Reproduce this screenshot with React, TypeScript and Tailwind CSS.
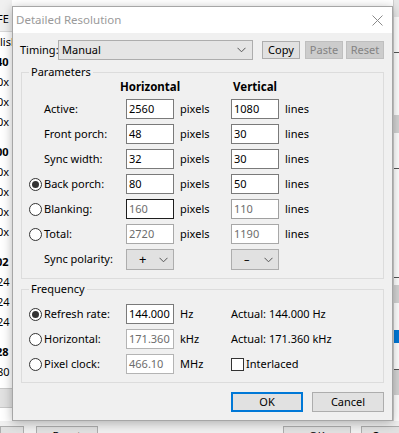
import React from 'react';

const Chevron = () => (
  <svg width="9" height="6" viewBox="0 0 9 6" className="shrink-0">
    <path d="M0.5 0.8 L4.5 4.8 L8.5 0.8" fill="none" stroke="#555" strokeWidth="1" />
  </svg>
);

const Radio = ({ checked }: { checked?: boolean }) => (
  <div className="w-[15px] flex items-center">
    <div className="w-[13px] h-[13px] rounded-full border border-[#333] bg-white flex items-center justify-center">
      {checked && <div className="w-[7px] h-[7px] rounded-full bg-[#333]" />}
    </div>
  </div>
);

const Field = ({ value, muted, border = 'border-[#7a7a7a]' }: { value: string; muted?: boolean; border?: string }) => (
  <div className={`w-[48px] h-[20px] bg-white border ${border} flex items-center pl-[2px] ${muted ? 'text-[#6d6d6d]' : 'text-black'}`}>
    {value}
  </div>
);

const Combo = ({ sign, signClass }: { sign: string; signClass: string }) => (
  <div className="w-[48px] h-[21px] bg-[#e1e1e1] border border-[#adadad] flex items-center">
    <span className={signClass}>{sign}</span>
    <span className="ml-auto mr-[5px]"><Chevron /></span>
  </div>
);

type Row = { label: string; radio?: 'on' | 'off'; h: string; v: string; muted?: boolean; hb?: string; vb?: string };

const rows: Row[] = [
  { label: 'Active:', h: '2560', v: '1080' },
  { label: 'Front porch:', h: '48', v: '30' },
  { label: 'Sync width:', h: '32', v: '30' },
  { label: 'Back porch:', radio: 'on', h: '80', v: '50' },
  { label: 'Blanking:', radio: 'off', h: '160', v: '110', muted: true, hb: 'border-[#1e1e1e]', vb: 'border-[#a0a0a0]' },
  { label: 'Total:', radio: 'off', h: '2720', v: '1190', muted: true, hb: 'border-[#a8a8a8]', vb: 'border-[#a8a8a8]' },
];

const GroupBox = ({ title, className, children }: { title: string; className: string; children: React.ReactNode }) => (
  <div className={`relative border border-[#dcdcdc] ${className}`}>
    <span className="absolute -top-[9px] left-[7px] px-[2px] bg-[#f0f0f0] leading-[16px]">{title}</span>
    {children}
  </div>
);

const leftItems: { t: string; b?: boolean; ml: string; gap?: boolean }[] = [
  { t: 'lish', ml: 'ml-[0px]' },
  { t: '40', b: true, ml: 'ml-[-4px]' },
  { t: '0x', ml: 'ml-[-3px]' },
  { t: '0x', ml: 'ml-[-3px]' },
  { t: '0x', ml: 'ml-[-3px]' },
  { t: '00', b: true, ml: 'ml-[-4px]', gap: true },
  { t: '0x', ml: 'ml-[-3px]' },
  { t: '0x', ml: 'ml-[-3px]' },
  { t: '0x', ml: 'ml-[-3px]' },
  { t: '0x', ml: 'ml-[-3px]' },
  { t: '02', b: true, ml: 'ml-[-4px]', gap: true },
  { t: '24', ml: 'ml-[-3px]' },
  { t: '24', ml: 'ml-[-3px]' },
  { t: '24', ml: 'ml-[-3px]' },
  { t: '28', b: true, ml: 'ml-[-4px]', gap: true },
  { t: '80', ml: 'ml-[-3px]' },
];

export default function App() {
  return (
    <div className="relative w-[399px] h-[433px] overflow-hidden bg-white text-[11px] text-black font-['Noto_Sans',sans-serif]">
      {/* window behind the dialog */}
      <div className="flex flex-col h-full">
        <div className="flex flex-1">
          <div className="w-[12px] flex flex-col overflow-hidden">
            <div className="h-[32px] bg-[#f0f0f0] border-b border-[#d8d8d8] flex items-end pb-[4px]">
              <span className="ml-[-3px] whitespace-nowrap leading-[16px]">FE</span>
            </div>
            {leftItems.map((it, i) => (
              <div key={i} className={`h-[20px] flex items-center whitespace-nowrap ${it.gap ? 'mt-[10px]' : ''}`}>
                <span className={`${it.ml} ${it.b ? 'font-bold' : ''}`}>{it.t}</span>
              </div>
            ))}
            <div className="mt-[6px] h-[20px] bg-[#e1e1e1] border-y border-[#c8c8c8]" />
          </div>
          <div className="flex-1" />
          <div className="w-[6px] flex flex-col border-l border-[#d0d0d0]">
            <div className="h-[17px] bg-[#e8e8e8]" />
            <div className="h-[35px]" />
            <div className="h-[1px] bg-[#555]" />
            <div className="h-[62px]" />
            <div className="h-[18px] bg-[#d4d4d4]" />
            <div className="h-[35px]" />
            <div className="h-[1px] bg-[#555]" />
            <div className="h-[108px]" />
            <div className="h-[1px] bg-[#555]" />
            <div className="h-[7px]" />
            <div className="h-[18px] bg-[#d4d4d4]" />
            <div className="h-[27px]" />
            <div className="h-[13px] bg-[#0078d7]" />
            <div className="h-[26px]" />
            <div className="h-[1px] bg-[#555]" />
            <div className="h-[25px] bg-[#d4d4d4]" />
          </div>
        </div>
        <div className="h-[12px] bg-[#f0f0f0] flex items-end">
          <div className="w-[25px] h-[7px] bg-[#e1e1e1] border-x border-t border-[#adadad]" />
          <div className="ml-[12px] w-[66px] h-[7px] bg-[#e1e1e1] border-x border-t border-[#adadad] overflow-hidden flex justify-center">
            <span className="leading-[14px] mt-[2px]">Reset</span>
          </div>
          <div className="ml-[185px] w-[72px] h-[7px] bg-[#e1e1e1] border-x border-t border-[#adadad] overflow-hidden flex justify-center">
            <span className="leading-[14px] mt-[2px]">OK</span>
          </div>
          <div className="ml-[10px] w-[40px] h-[7px] bg-[#e1e1e1] border-l border-t border-[#adadad] overflow-hidden pl-[10px]">
            <span className="leading-[14px] mt-[2px] block">Cancel</span>
          </div>
        </div>
      </div>

      {/* dialog */}
      <div className="absolute left-[12px] top-[6px] w-[381px] h-[415px] flex flex-col border border-[#a6a6a6] bg-[#f0f0f0] shadow-[0_2px_10px_rgba(0,0,0,0.28)]">
        <div className="h-[26px] bg-white flex items-center pl-[3px]">
          <span className="text-[#9a9a9a] text-[11.5px]">Detailed Resolution</span>
          <svg width="11" height="11" viewBox="0 0 11 11" className="ml-auto mr-[9px]">
            <path d="M0.5 0.5 L10.5 10.5 M10.5 0.5 L0.5 10.5" stroke="#8a8a8a" strokeWidth="1" />
          </svg>
        </div>

        <div className="flex-1 flex flex-col px-[8px] pt-[7px]">
          {/* timing */}
          <div className="flex items-center h-[20px]">
            <span className="w-[38px] -ml-[1px]">Timing:</span>
            <div className="w-[195px] h-[20px] bg-[#e5e5e5] border border-[#adadad] flex items-center pl-[3px]">
              <span>Manual</span>
              <span className="ml-auto mr-[6px]"><Chevron /></span>
            </div>
            <div className="ml-[9px] w-[38px] h-[18px] bg-[#e1e1e1] border border-[#adadad] flex items-center justify-center">Copy</div>
            <div className="ml-[5px] w-[38px] h-[18px] bg-[#cccccc] border border-[#bfbfbf] text-[#838383] flex items-center justify-center">Paste</div>
            <div className="ml-[3px] w-[38px] h-[18px] bg-[#cccccc] border border-[#bfbfbf] text-[#838383] flex items-center justify-center">Reset</div>
          </div>

          {/* parameters */}
          <GroupBox title="Parameters" className="mt-[12px] h-[207px] pt-[4px] pl-[7px]">
            <div className="flex h-[20px] items-center font-bold text-[11.5px]">
              <div className="w-[97px]" />
              <div className="w-[48px] flex justify-center whitespace-nowrap">Horizontal</div>
              <div className="w-[57px]" />
              <div className="w-[48px] flex justify-center whitespace-nowrap">Vertical</div>
            </div>
            <div className="flex flex-col gap-[5px] mt-[2px]">
              {rows.map((r) => (
                <div key={r.label} className="flex items-center h-[20px]">
                  {r.radio ? <Radio checked={r.radio === 'on'} /> : <div className="w-[15px]" />}
                  <span className="w-[82px]">{r.label}</span>
                  <Field value={r.h} muted={r.muted} border={r.hb} />
                  <span className="w-[57px] pl-[6px]">pixels</span>
                  <Field value={r.v} muted={r.muted} border={r.vb} />
                  <span className="pl-[6px]">lines</span>
                </div>
              ))}
              <div className="flex items-center h-[21px]">
                <div className="w-[15px]" />
                <span className="w-[82px]">Sync polarity:</span>
                <Combo sign="+" signClass="ml-[12px] text-[13px]" />
                <div className="w-[57px]" />
                <Combo sign="–" signClass="ml-[12px]" />
              </div>
            </div>
          </GroupBox>

          {/* frequency */}
          <GroupBox title="Frequency" className="mt-[10px] h-[94px] pt-[14px] pl-[7px]">
            <div className="flex flex-col gap-[5px]">
              <div className="flex items-center h-[20px]">
                <Radio checked />
                <span className="w-[82px]">Refresh rate:</span>
                <Field value="144.000" />
                <span className="w-[57px] pl-[6px]">Hz</span>
                <span>Actual: 144.000 Hz</span>
              </div>
              <div className="flex items-center h-[20px]">
                <Radio />
                <span className="w-[82px]">Horizontal:</span>
                <Field value="171.360" muted border="border-[#b4b4b4]" />
                <span className="w-[57px] pl-[6px]">kHz</span>
                <span>Actual: 171.360 kHz</span>
              </div>
              <div className="flex items-center h-[20px]">
                <Radio />
                <span className="w-[82px]">Pixel clock:</span>
                <Field value="466.10" muted border="border-[#b4b4b4]" />
                <span className="w-[57px] pl-[6px]">MHz</span>
                <div className="w-[13px] h-[13px] bg-white border border-[#333]" />
                <span className="pl-[2px]">Interlaced</span>
              </div>
            </div>
          </GroupBox>

          {/* buttons */}
          <div className="mt-[9px] flex justify-end gap-[9px]">
            <div className="w-[72px] h-[20px] bg-[#e1e1e1] border-2 border-[#0078d7] flex items-center justify-center">OK</div>
            <div className="w-[72px] h-[20px] bg-[#e1e1e1] border border-[#adadad] flex items-center justify-center">Cancel</div>
          </div>
        </div>
      </div>
    </div>
  );
}
